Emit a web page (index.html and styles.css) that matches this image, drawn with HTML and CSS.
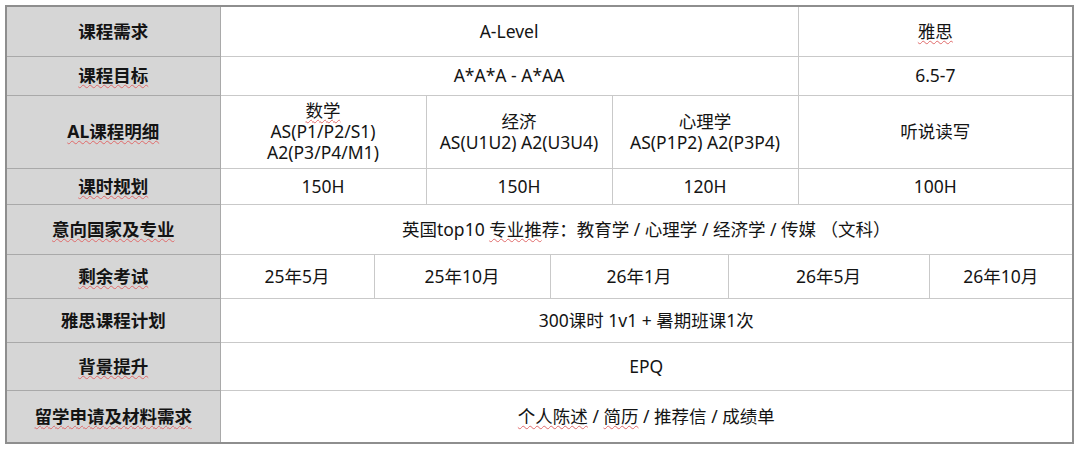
FILE: index.html
```html
<!DOCTYPE html>
<html lang="zh-CN">
<head>
<meta charset="utf-8">
<title>课程规划</title>
<link rel="stylesheet" href="styles.css">
</head>
<body>
<table class="plan">
  <colgroup>
    <col class="c-head">
    <col class="c1"><col class="c2"><col class="c3"><col class="c4">
    <col class="c5"><col class="c6"><col class="c7"><col class="c8">
  </colgroup>
  <tbody>
    <tr class="r1">
      <th>课程需求</th>
      <td colspan="6">A-Level</td>
      <td colspan="2"><span class="sq">雅思</span></td>
    </tr>
    <tr class="r2">
      <th><span class="sq">课程目标</span></th>
      <td colspan="6">A*A*A - A*AA</td>
      <td colspan="2">6.5-7</td>
    </tr>
    <tr class="r3">
      <th><span class="sq">AL课程明细</span></th>
      <td colspan="2"><span class="sq">数学</span><br>AS(P1/P2/S1)<br>A2(P3/P4/M1)</td>
      <td colspan="2">经济<br>AS(U1U2) A2(U3U4)</td>
      <td colspan="2">心理学<br>AS(P1P2) A2(P3P4)</td>
      <td colspan="2">听说读写</td>
    </tr>
    <tr class="r4">
      <th><span class="sq">课时规划</span></th>
      <td colspan="2">150H</td>
      <td colspan="2">150H</td>
      <td colspan="2">120H</td>
      <td colspan="2">100H</td>
    </tr>
    <tr class="r5">
      <th><span class="sq">意向国家及专业</span></th>
      <td colspan="8">英国top10 <span class="sq">专业推</span>荐：教育学 / 心理学 / 经济学 / 传媒 （文科）</td>
    </tr>
    <tr class="r6">
      <th><span class="sq">剩余考试</span></th>
      <td>25年5月</td>
      <td colspan="2">25年10月</td>
      <td colspan="2">26年1月</td>
      <td colspan="2">26年5月</td>
      <td>26年10月</td>
    </tr>
    <tr class="r7">
      <th>雅思课程计划</th>
      <td colspan="8">300课时 1v1 + 暑期班课1次</td>
    </tr>
    <tr class="r8">
      <th><span class="sq">背景提升</span></th>
      <td colspan="8">EPQ</td>
    </tr>
    <tr class="r9">
      <th><span class="sq">留学申请及材料需求</span></th>
      <td colspan="8"><span class="sq">个人陈述</span> / <span class="sq">简历</span> / 推荐信 / 成绩单</td>
    </tr>
  </tbody>
</table>
</body>
</html>
```
FILE: styles.css
```css
html, body {
  margin: 0;
  padding: 0;
  background: #ffffff;
}

body {
  padding: 5px 0 0 5px;
  font-family: "Noto Sans", "Noto Sans CJK SC", sans-serif;
  color: #141414;
}

.plan {
  border-collapse: collapse;
  table-layout: fixed;
  width: 1067px;
  border: 2px solid #8e8e8e;
  font-size: 17.5px;
}

.c-head { width: 214px; }
.c1 { width: 154px; }
.c2 { width: 52px; }
.c3 { width: 124px; }
.c4 { width: 62px; }
.c5 { width: 116px; }
.c6 { width: 70px; }
.c7 { width: 131px; }
.c8 { width: 144px; }

.plan th,
.plan td {
  padding: 0;
  text-align: center;
  vertical-align: middle;
  line-height: 21px;
}

.plan th {
  background: #d6d6d6;
  font-weight: 700;
  font-size: 17.5px;
  border: 1px solid #a9a9a9;
  color: #141414;
}

.plan td {
  border: 1px solid #c9c9c9;
  font-weight: 400;
}

.r1 { height: 50px; }
.r2 { height: 39px; }
.r3 { height: 73px; }
.r4 { height: 36px; }
.r5 { height: 50px; }
.r6 { height: 44px; }
.r7 { height: 44px; }
.r8 { height: 48px; }
.r9 { height: 53px; }

.sq {
  text-decoration: underline wavy #e06a6a;
  text-decoration-thickness: 1px;
  text-underline-offset: 2px;
}
```
